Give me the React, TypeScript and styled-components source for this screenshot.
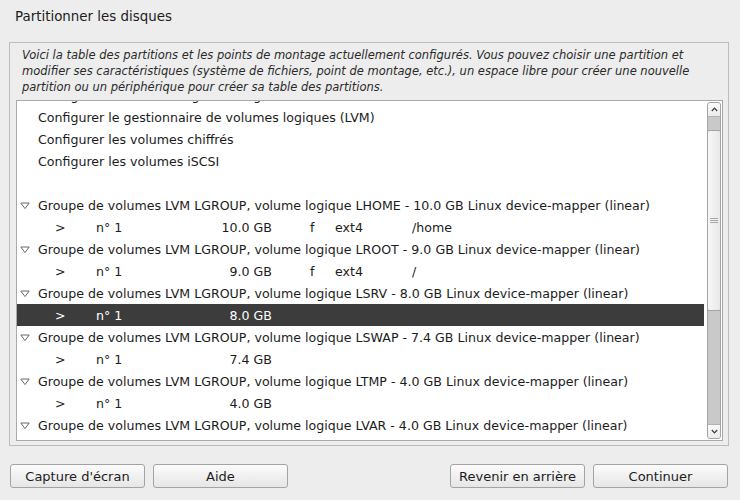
import React, { useLayoutEffect, useRef } from 'react';
import styled, { createGlobalStyle } from 'styled-components';

type ChildPart = { size: string; usage?: string; fs?: string; mount?: string; selected?: boolean };
type Entry =
  | { kind: 'action'; label: string }
  | { kind: 'blank' }
  | { kind: 'group'; label: string }
  | ({ kind: 'part' } & ChildPart);

const GlobalStyle = createGlobalStyle`
  html, body { margin: 0; padding: 0; background: #ededed; }
  body {
    font-family: 'DejaVu Sans', 'Liberation Sans', sans-serif;
    color: #1c1c1c;
  }
`;

const Screen = styled.div`
  width: 740px;
  height: 500px;
  display: flex;
  flex-direction: column;
  background: #ededed;
`;

const Title = styled.h1`
  margin: 0;
  height: 42px;
  box-sizing: border-box;
  padding: 9px 0 0 15px;
  font-size: 13.4px;
  line-height: 16px;
  font-weight: normal;
`;

const Frame = styled.section`
  margin: 0 11px 0 9px;
  height: 404px;
  box-sizing: border-box;
  border: 1px solid #bcbcbc;
  padding: 4px 5px 4px 6px;
  display: flex;
  flex-direction: column;
`;

const Intro = styled.p`
  margin: 0 0 5px 6px;
  font-style: italic;
  font-size: 11.5px;
  line-height: 16px;
  color: #2a2a2a;
  white-space: nowrap;
`;

const TreeBox = styled.div`
  flex: 1;
  display: flex;
  border: 1px solid #a9a9a9;
  background: #ffffff;
  min-height: 0;
`;

const List = styled.div`
  width: 687px;
  overflow: hidden;
  font-size: 12.6px;
`;

const Row = styled.div<{ $selected?: boolean }>`
  height: 22px;
  line-height: 22px;
  padding: 1px 0 0 3px;
  box-sizing: border-box;
  display: flex;
  align-items: center;
  white-space: nowrap;
  background: ${(p) => (p.$selected ? '#3c3c3c' : 'transparent')};
  color: ${(p) => (p.$selected ? '#ffffff' : 'inherit')};
`;

const Expander = styled.span`
  width: 18px;
  height: 22px;
  display: flex;
  align-items: center;
  flex-shrink: 0;
`;

const PartCells = styled.div`
  display: grid;
  grid-template-columns: 17px 41px 100px 76px 38px 25px 77px auto;
`;

const Cell = styled.span<{ $right?: boolean }>`
  text-align: ${(p) => (p.$right ? 'right' : 'left')};
`;

const Scrollbar = styled.div`
  width: 14px;
  margin: 1px 1px 1px 3px;
  box-sizing: border-box;
  border: 1px solid #a4a4a4;
  border-radius: 3px;
  display: flex;
  flex-direction: column;
  background: #c9c9c9;
  overflow: hidden;
`;

const StepButton = styled.div`
  height: 13px;
  flex-shrink: 0;
  display: flex;
  align-items: center;
  justify-content: center;
  background: linear-gradient(#fafafa, #ececec);
`;

const Track = styled.div`
  flex: 1;
  display: flex;
  flex-direction: column;
  padding-top: 13px;
  border-top: 1px solid #b3b3b3;
  border-bottom: 1px solid #b3b3b3;
`;

const Thumb = styled.div`
  height: 181px;
  box-sizing: border-box;
  margin: 0 -1px;
  border: 1px solid #a4a4a4;
  border-radius: 2px;
  background: linear-gradient(90deg, #f6f6f6, #e9e9e9);
  display: flex;
  align-items: center;
  justify-content: center;
`;

const ButtonBar = styled.div`
  display: flex;
  align-items: center;
  justify-content: space-between;
  padding: 18px 12px 0 10px;
`;

const ButtonGroup = styled.div`
  display: flex;
  gap: 8px;
`;

const Button = styled.button`
  width: 135px;
  height: 24px;
  box-sizing: border-box;
  border: 1px solid #a3a3a3;
  border-radius: 3px;
  background: linear-gradient(#fbfbfb, #e6e6e6);
  font-family: 'DejaVu Sans', 'Liberation Sans', sans-serif;
  font-size: 13px;
  color: #1c1c1c;
  padding: 0;
`;

const entries: Entry[] = [
  { kind: 'action', label: 'Partitionnement assisté' },
  { kind: 'action', label: 'Configurer le RAID avec gestion logicielle' },
  { kind: 'action', label: 'Configurer le gestionnaire de volumes logiques (LVM)' },
  { kind: 'action', label: 'Configurer les volumes chiffrés' },
  { kind: 'action', label: 'Configurer les volumes iSCSI' },
  { kind: 'blank' },
  { kind: 'group', label: 'Groupe de volumes LVM LGROUP, volume logique LHOME - 10.0 GB Linux device-mapper (linear)' },
  { kind: 'part', size: '10.0 GB', usage: 'f', fs: 'ext4', mount: '/home' },
  { kind: 'group', label: 'Groupe de volumes LVM LGROUP, volume logique LROOT - 9.0 GB Linux device-mapper (linear)' },
  { kind: 'part', size: '9.0 GB', usage: 'f', fs: 'ext4', mount: '/' },
  { kind: 'group', label: 'Groupe de volumes LVM LGROUP, volume logique LSRV - 8.0 GB Linux device-mapper (linear)' },
  { kind: 'part', size: '8.0 GB', selected: true },
  { kind: 'group', label: 'Groupe de volumes LVM LGROUP, volume logique LSWAP - 7.4 GB Linux device-mapper (linear)' },
  { kind: 'part', size: '7.4 GB' },
  { kind: 'group', label: 'Groupe de volumes LVM LGROUP, volume logique LTMP - 4.0 GB Linux device-mapper (linear)' },
  { kind: 'part', size: '4.0 GB' },
  { kind: 'group', label: 'Groupe de volumes LVM LGROUP, volume logique LVAR - 4.0 GB Linux device-mapper (linear)' },
  { kind: 'part', size: '4.0 GB' },
  { kind: 'group', label: 'SCSI1 (0,0,0) (sda) - 42.9 GB ATA VBOX HARDDISK' },
  { kind: 'part', size: '254.8 MB', usage: 'f', fs: 'ext2', mount: '/boot' },
];

const Triangle = () => (
  <svg width="10" height="8" viewBox="0 0 10 8">
    <polygon points="0.8,1 9.2,1 5,6.6" fill="none" stroke="#6a6a6a" strokeWidth="1" />
  </svg>
);

const Chevron = ({ up }: { up?: boolean }) => (
  <svg width="7" height="5" viewBox="0 0 7 5">
    <polyline
      points={up ? '0.8,4 3.5,1.2 6.2,4' : '0.8,1 3.5,3.8 6.2,1'}
      fill="none"
      stroke="#3a3a3a"
      strokeWidth="1.2"
    />
  </svg>
);

const Grip = () => (
  <svg width="8" height="7" viewBox="0 0 8 7">
    <path d="M0 1.5h8M0 3.5h8M0 5.5h8" stroke="#a8a8a8" strokeWidth="1" />
  </svg>
);

const TreeRow = ({ entry }: { entry: Entry }) => {
  if (entry.kind === 'blank') return <Row />;
  if (entry.kind === 'part') {
    return (
      <Row $selected={entry.selected}>
        <Expander />
        <PartCells>
          <span />
          <Cell>&gt;</Cell>
          <Cell>n° 1</Cell>
          <Cell $right>{entry.size}</Cell>
          <span />
          <Cell>{entry.usage}</Cell>
          <Cell>{entry.fs}</Cell>
          <Cell>{entry.mount}</Cell>
        </PartCells>
      </Row>
    );
  }
  return (
    <Row>
      <Expander>{entry.kind === 'group' && <Triangle />}</Expander>
      {entry.label}
    </Row>
  );
};

export default function App() {
  const listRef = useRef<HTMLDivElement>(null);

  // the list is scrolled a little past the first entries
  useLayoutEffect(() => {
    if (listRef.current) listRef.current.scrollTop = 39;
  }, []);

  return (
    <Screen>
      <GlobalStyle />
      <Title>Partitionner les disques</Title>
      <Frame>
        <Intro>
          Voici la table des partitions et les points de montage actuellement configurés. Vous pouvez choisir une partition et
          <br />
          modifier ses caractéristiques (système de fichiers, point de montage, etc.), un espace libre pour créer une nouvelle
          <br />
          partition ou un périphérique pour créer sa table des partitions.
        </Intro>
        <TreeBox>
          <List ref={listRef}>
            {entries.map((e, i) => (
              <TreeRow key={i} entry={e} />
            ))}
          </List>
          <Scrollbar>
            <StepButton>
              <Chevron up />
            </StepButton>
            <Track>
              <Thumb>
                <Grip />
              </Thumb>
            </Track>
            <StepButton>
              <Chevron />
            </StepButton>
          </Scrollbar>
        </TreeBox>
      </Frame>
      <ButtonBar>
        <ButtonGroup>
          <Button>Capture d'écran</Button>
          <Button>Aide</Button>
        </ButtonGroup>
        <ButtonGroup>
          <Button>Revenir en arrière</Button>
          <Button>Continuer</Button>
        </ButtonGroup>
      </ButtonBar>
    </Screen>
  );
}
